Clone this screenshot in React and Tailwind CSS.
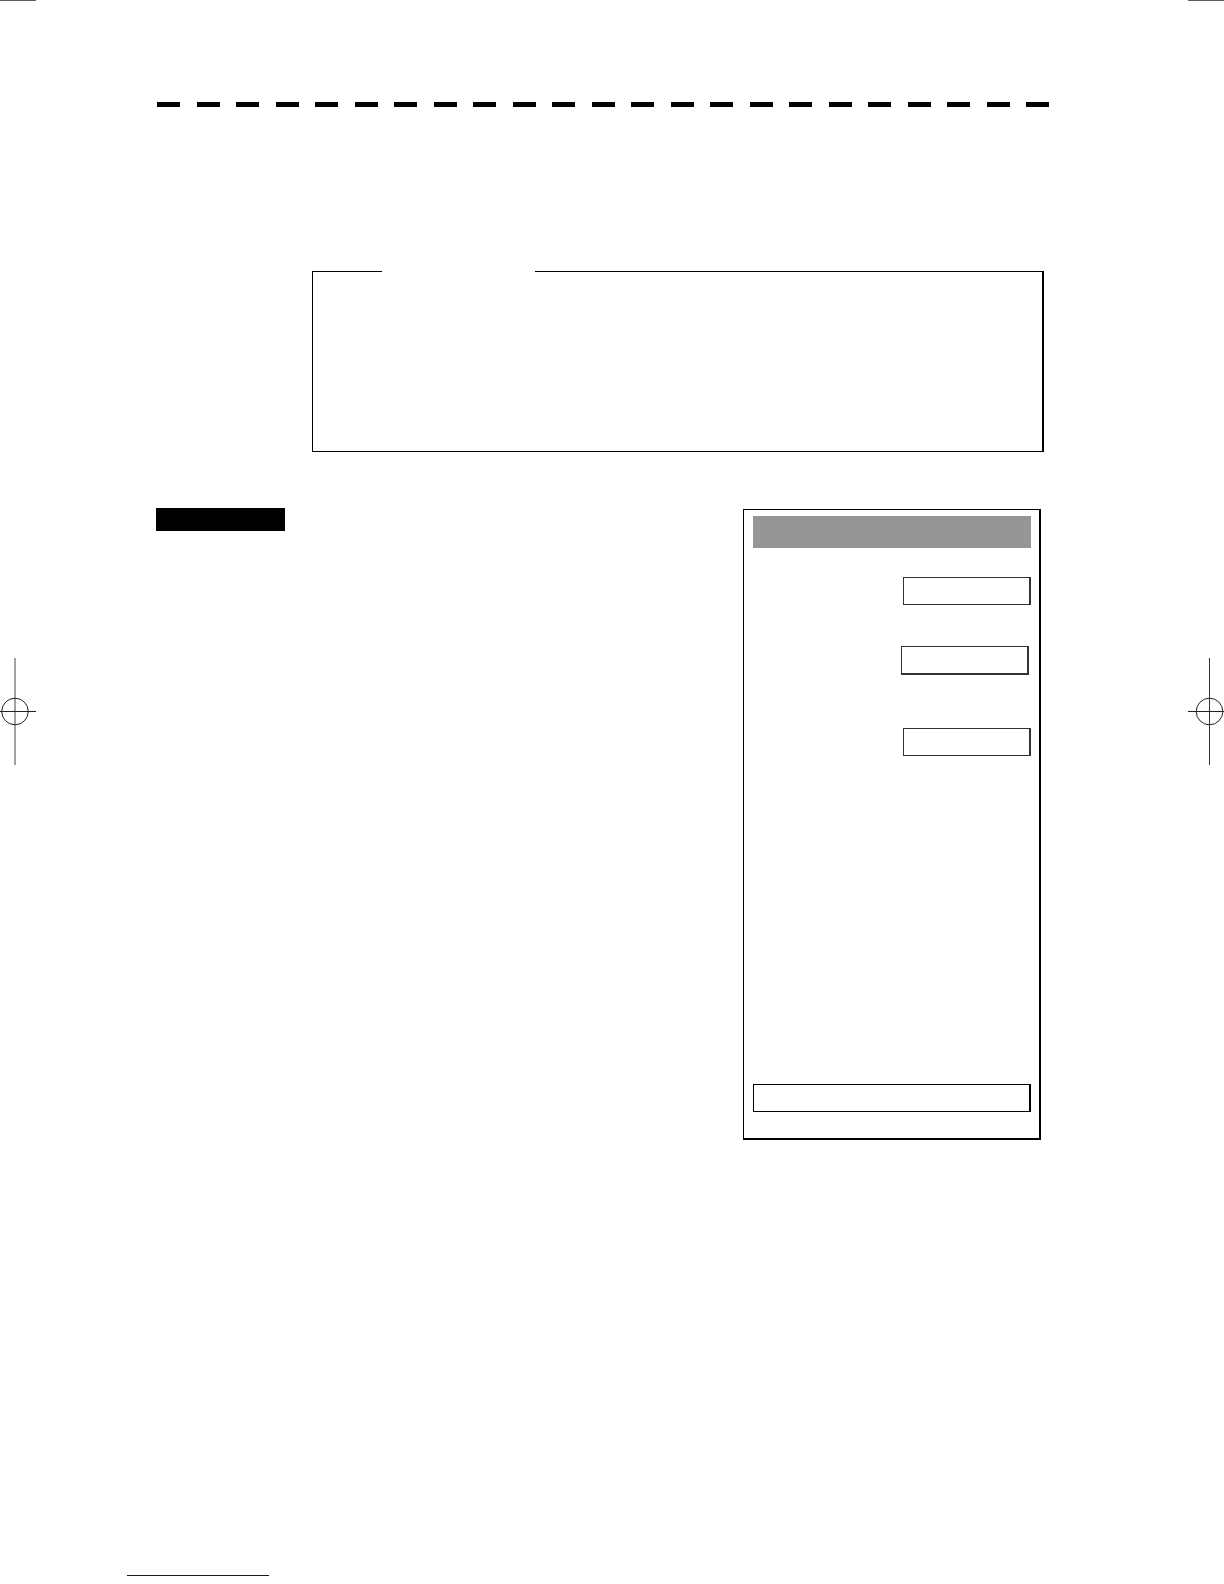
// src/App.jsx
import React from "react";

const dashes = Array.from({ length: 23 }, (_, i) => i);

const fields = [
  { id: "field-1", className: "mt-[29px] h-7 border-b" },
  { id: "field-2", className: "mt-[41px] mr-0.5 h-[29px] border-b-2" },
  { id: "field-3", className: "mt-[53px] h-7 border-b" },
];

// printer's registration mark
function RegistrationMark({ cx, lineColor }) {
  return (
    <svg
      width="36"
      height="107"
      viewBox="0 0 36 107"
      fill="none"
      aria-hidden="true"
      className="mt-[657px] block overflow-visible"
    >
      <line x1={cx} y1="0" x2={cx} y2="107" stroke={lineColor} />
      <line x1="0" y1="53.5" x2="36.5" y2="53.5" stroke="#222" />
      <circle cx={cx} cy="53.5" r="13.3" stroke="#222" />
    </svg>
  );
}

function MarginColumn({ cx, lineColor }) {
  return (
    <div className="w-9 shrink-0 overflow-x-clip">
      <div className="h-px bg-[#5e5e5e]" />
      <RegistrationMark cx={cx} lineColor={lineColor} />
    </div>
  );
}

function Panel() {
  return (
    <form
      onSubmit={e => e.preventDefault()}
      className="mt-px flex w-[298px] flex-col border border-r-2 border-b-2 border-black pt-1.5 pr-2 pb-[26px] pl-[9px]"
    >
      <div className="h-8 bg-[#969696]" />
      {fields.map((f, i) => (
        <input
          key={f.id}
          id={f.id}
          type="text"
          aria-label={`Field ${i + 1}`}
          className={`w-32 self-end border-t border-r-2 border-l border-[#333] bg-white px-2 text-sm ${f.className}`}
        />
      ))}
      <button
        type="button"
        aria-label="Panel action"
        className="mt-[328px] h-7 border border-r-2 border-black bg-white"
      />
    </form>
  );
}

export default function App() {
  return (
    <div className="flex min-h-screen bg-white font-['Liberation_Sans',sans-serif]">
      <MarginColumn cx={15} lineColor="#444" />

      <main className="flex min-w-0 flex-1 flex-col pt-[102px] pb-2">
        <div className="mr-[139px] ml-[121px] flex justify-between">
          {dashes.map(i => (
            <div key={i} className="h-[5px] w-[23px] bg-black" />
          ))}
        </div>

        {/* note frame, the empty legend opens the top rule */}
        <fieldset className="mt-[164px] mr-36 ml-[276px] h-[181px] border border-r-2 border-black pl-[69px]">
          <legend className="h-px w-[153px]" />
        </fieldset>

        <section className="mt-14 mr-[147px] ml-[120px] flex items-start justify-between">
          <div className="h-[23px] w-[129px] bg-black" />
          <Panel />
        </section>

        <a
          href="#"
          aria-label="Link"
          className="mt-[420px] ml-[91px] block h-4 w-[142px] border-b border-[#0a0a99]"
        />
      </main>

      <MarginColumn cx={21.5} lineColor="#333" />
    </div>
  );
}
